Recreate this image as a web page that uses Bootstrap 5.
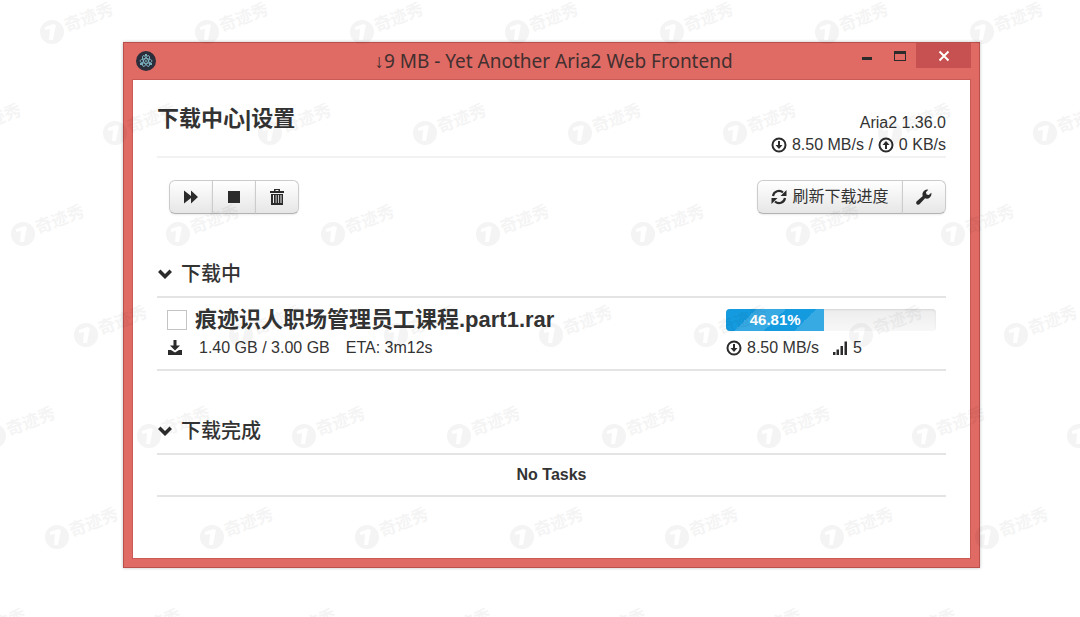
<!DOCTYPE html>
<html lang="zh-CN">
<head>
<meta charset="utf-8">
<meta name="viewport" content="width=device-width, initial-scale=1">
<title>Yet Another Aria2 Web Frontend</title>
<link href="https://cdn.jsdelivr.net/npm/bootstrap@5.3.0/dist/css/bootstrap.min.css" rel="stylesheet">
<style>
  body { font: 16px/22px "Liberation Sans", "Noto Sans CJK SC", sans-serif; color: #333; background: #fff; padding: 42px 100px 0 123px; min-height: 100vh; overflow-x: hidden; }
  a, a:hover { color: inherit; text-decoration: none; }
  svg { display: block; fill: #2b2b2b; flex: none; }
  .app-window { background: #e06a64; border: 1px solid #b9504c; box-shadow: 0 0 3px rgba(0,0,0,.25); padding: 0 8px 8px; }
  .title-bar { height: 36px; }
  .app-title { font: 19px/36px "Noto Sans", "Open Sans", sans-serif; color: #41302f; white-space: nowrap; }
  .title-side { flex: 1 0 0; }
  .win-btn { border: 0; background: none; padding: 0; width: 33px; height: 25px; display: flex; align-items: center; justify-content: center; }
  .win-close { width: 55px; background: #c75050; }
  .pane { background: #fff; border: 1px solid #c95a55; padding: 22px 24px 61px; }
  .page-head { border-bottom: 2px solid #f2f2f2; height: 56px; margin-bottom: 22px; }
  .page-head h1 { font-size: 22px; line-height: 34px; font-weight: 700; }
  .server-info { padding-top: 10px; }
  .stat-line { display: flex; align-items: center; gap: 5px; }
  .tool-row { margin-bottom: 46px; padding-left: 12px; }
  .tool-btn { height: 34px; padding: 0; border: 1px solid #ccc; border-bottom-color: #b3b3b3; color: #333; background: linear-gradient(#fff, #e6e6e6); box-shadow: 0 1px 2px rgba(0,0,0,.08); font-size: 16px; line-height: 22px; display: flex; align-items: center; justify-content: center; gap: 5px; }
  .tool-btn:hover { background: #e6e6e6; }
  .icon-btn { width: 44px; }
  .refresh-btn { width: 146px; }
  .section-title { font-size: 20px; line-height: 28px; font-weight: 500; gap: 8px; }
  .active-tasks { padding-bottom: 46px; }
  .ruled { border-top: 2px solid #e4e4e4; border-bottom: 2px solid #e4e4e4; }
  .task { padding: 11px 10px 10px; }
  .task-check.form-check-input { width: 20px; height: 20px; margin: 0; border: 1px solid #c4c4c4; border-radius: 0; flex: none; }
  .task-name { font-size: 22px; line-height: 22px; font-weight: 700; }
  .task-meta { margin-top: 6px; }
  .task-side { width: 210px; }
  .task-progress { height: 22px; border-radius: 4px; background: linear-gradient(#ededed, #f8f8f8); box-shadow: inset 0 1px 2px rgba(0,0,0,.1); font-size: 15px; }
  .task-progress .progress-bar { font-weight: 700; background-color: #149bdf; background-image: linear-gradient(-45deg, rgba(255,255,255,.15) 25%, transparent 25%, transparent 50%, rgba(255,255,255,.15) 50%, rgba(255,255,255,.15) 75%, transparent 75%); background-size: 60px 60px; }
  .empty-row { line-height: 40px; font-weight: 700; text-align: center; }
  .watermarks { position: absolute; inset: 0; overflow: hidden; pointer-events: none; }
  .watermarks svg { width: 100%; height: 100%; fill: #000; opacity: .04; }
  .watermarks text { font: 700 17px "Noto Sans CJK SC", sans-serif; }
</style>
</head>
<body class="position-relative">
<div class="app-window">
  <header class="title-bar d-flex">
    <div class="title-side pt-2 ps-1">
      <svg class="position-relative" width="20" height="20" viewBox="0 0 20 20" aria-hidden="true">
        <circle cx="10" cy="10" r="10" fill="#2b2e3a"/>
        <g fill="none" stroke="#9feaf9" stroke-width=".8" opacity=".8"><ellipse cx="10" cy="10" rx="6" ry="2.3"/><ellipse cx="10" cy="10" rx="6" ry="2.3" transform="rotate(60 10 10)"/><ellipse cx="10" cy="10" rx="6" ry="2.3" transform="rotate(120 10 10)"/></g>
        <g fill="#9feaf9"><circle cx="10" cy="10" r=".8"/><circle cx="10" cy="4" r=".9"/><circle cx="5" cy="13" r=".9"/><circle cx="15" cy="13" r=".9"/></g>
      </svg>
    </div>
    <div class="app-title">↓9 MB - Yet Another Aria2 Web Frontend</div>
    <div class="title-side d-flex justify-content-end">
      <button class="win-btn" type="button" aria-label="最小化"><svg width="14" height="12"><path d="M2 7h10v3H2z"/></svg></button>
      <button class="win-btn" type="button" aria-label="最大化"><svg width="14" height="12"><path d="M1 1h12v10H1zM2 4v6h10V4z" fill-rule="evenodd"/></svg></button>
      <button class="win-btn win-close" type="button" aria-label="关闭"><svg width="12" height="12"><path d="M1.500 1.500l9 9M10.500 1.500l-9 9" stroke="#fff" stroke-width="2"/></svg></button>
    </div>
  </header>
  <main class="pane">
    <div class="page-head d-flex justify-content-between">
      <h1 class="mb-0"><a href="#">下载中心</a>|<a href="#">设置</a></h1>
      <div class="server-info text-end">
        <div>Aria2 1.36.0</div>
        <div class="stat-line justify-content-end">
          <svg width="16" height="16"><circle cx="8" cy="8" r="6.500" fill="none" stroke="#2b2b2b" stroke-width="2"/><path d="M7 4h2v4h2.500L8 12 4.500 8H7z"/></svg>
          <span>8.50 MB/s /</span>
          <svg width="16" height="16"><circle cx="8" cy="8" r="6.500" fill="none" stroke="#2b2b2b" stroke-width="2"/><path d="M7 12h2V8h2.500L8 4 4.500 8H7z"/></svg>
          <span>0 KB/s</span>
        </div>
      </div>
    </div>
    <div class="tool-row d-flex justify-content-between">
      <div class="btn-group">
        <button class="btn tool-btn icon-btn" type="button" aria-label="全部开始"><svg width="16" height="16"><path d="M1 1.500 8 7V1.500L15 8l-7 6.500V9l-7 5.500z"/></svg></button>
        <button class="btn tool-btn icon-btn" type="button" aria-label="全部停止"><svg width="16" height="16"><path d="M2 2h12v12H2z"/></svg></button>
        <button class="btn tool-btn icon-btn" type="button" aria-label="删除"><svg width="16" height="18"><path d="M5 3V1h6v2h4v2H1V3zM6.500 2v1h3V2zM2 6h12v11H2zM4 7v8h1V7zM6.700 7v8h.8V7zM9 7v8h.8V7zM11.500 7v8h1V7z" fill-rule="evenodd"/></svg></button>
      </div>
      <div class="btn-group">
        <button class="btn tool-btn refresh-btn" type="button"><svg width="16" height="16"><path d="M2 7a6 6 0 0 1 10-3.500M14 9a6 6 0 0 1-10 3.500" fill="none" stroke="#2b2b2b" stroke-width="2.200"/><path d="M15.500 1v6h-6zM.5 15V9h6z"/></svg>刷新下载进度</button>
        <button class="btn tool-btn icon-btn" type="button" aria-label="设置"><svg width="16" height="16"><path d="M15.300 3.800a4.700 4.700 0 0 1-6.200 5.500l-5.400 5.800a2 2 0 0 1-2.900-2.800l6-5.300A4.700 4.700 0 0 1 12.300.7L9.900 3.200l.7 2.200 2.200.6z"/></svg></button>
      </div>
    </div>
    <section class="active-tasks">
      <h2 class="section-title d-flex align-items-center mb-2"><svg width="16" height="16"><path d="M1 6l2.500-2.500L8 8l4.500-4.500L15 6l-7 7z"/></svg>下载中</h2>
      <div class="ruled task d-flex justify-content-between">
        <div>
          <div class="d-flex align-items-center gap-2">
            <input class="form-check-input task-check" type="checkbox" id="task1">
            <label class="task-name" for="task1">痕迹识人职场管理员工课程.part1.rar</label>
          </div>
          <div class="task-meta d-flex align-items-center">
            <svg class="me-3" width="16" height="16"><path d="M6.500 0h3v5.500H13L8 10.500 3 5.500h3.500zM1 10h3l4 2.500 4-2.500h3v5H1z"/></svg>
            <span>1.40 GB / 3.00 GB</span>
            <span class="ms-3">ETA: 3m12s</span>
          </div>
        </div>
        <div class="task-side">
          <div class="progress task-progress" role="progressbar" aria-label="下载进度" aria-valuenow="46.81" aria-valuemin="0" aria-valuemax="100">
            <div class="progress-bar" style="width: 46.81%">46.81%</div>
          </div>
          <div class="task-meta stat-line">
            <svg width="16" height="16"><circle cx="8" cy="8" r="6.500" fill="none" stroke="#2b2b2b" stroke-width="2"/><path d="M7 4h2v4h2.500L8 12 4.500 8H7z"/></svg>
            <span class="me-2">8.50 MB/s</span>
            <svg width="16" height="16"><path d="M1 12h2.500v3H1zM4.500 9.500H7V15H4.500zM8.500 6H11v9H8.500zM12.500 1.500H15V15h-2.500z"/></svg>
            <span>5</span>
          </div>
        </div>
      </div>
    </section>
    <section>
      <h2 class="section-title d-flex align-items-center mb-2"><svg width="16" height="16"><path d="M1 6l2.500-2.500L8 8l4.500-4.500L15 6l-7 7z"/></svg>下载完成</h2>
      <div class="ruled empty-row">No Tasks</div>
    </section>
  </main>
</div>
<div class="watermarks" aria-hidden="true"><svg id="marks"></svg></div>
<script src="https://cdn.jsdelivr.net/npm/bootstrap@5.3.0/dist/js/bootstrap.bundle.min.js"></script>
<script>
  // Staggered lattice of brand marks: each row shifts right and wraps round.
  const stepX = 155, stepY = 101, shift = 63, rows = 7, markWidth = 68;
  let out = '';
  for (let r = 0; r < rows; r++) {
    const start = (52 + r * shift) % stepX - stepX;
    for (let x = start; x < innerWidth + 12; x += stepX) {
      if (x < -markWidth) continue;
      // Only draw the wordmark where it falls inside the window.
      const word = x + 14 < innerWidth ? '<text x="15" y="0" transform="rotate(-21 15 0)">奇迹秀</text>' : '';
      out += `<g transform="translate(${x} ${32 + r * stepY})">
        <path fill-rule="evenodd" d="M-12 0a12 12 0 1 0 24 0a12 12 0 1 0-24 0M-7-5l8-3 3 1-3 15h-4l1-11-5 1z"/>${word}</g>`;
    }
  }
  document.getElementById('marks').innerHTML = out;
</script>
</body>
</html>
